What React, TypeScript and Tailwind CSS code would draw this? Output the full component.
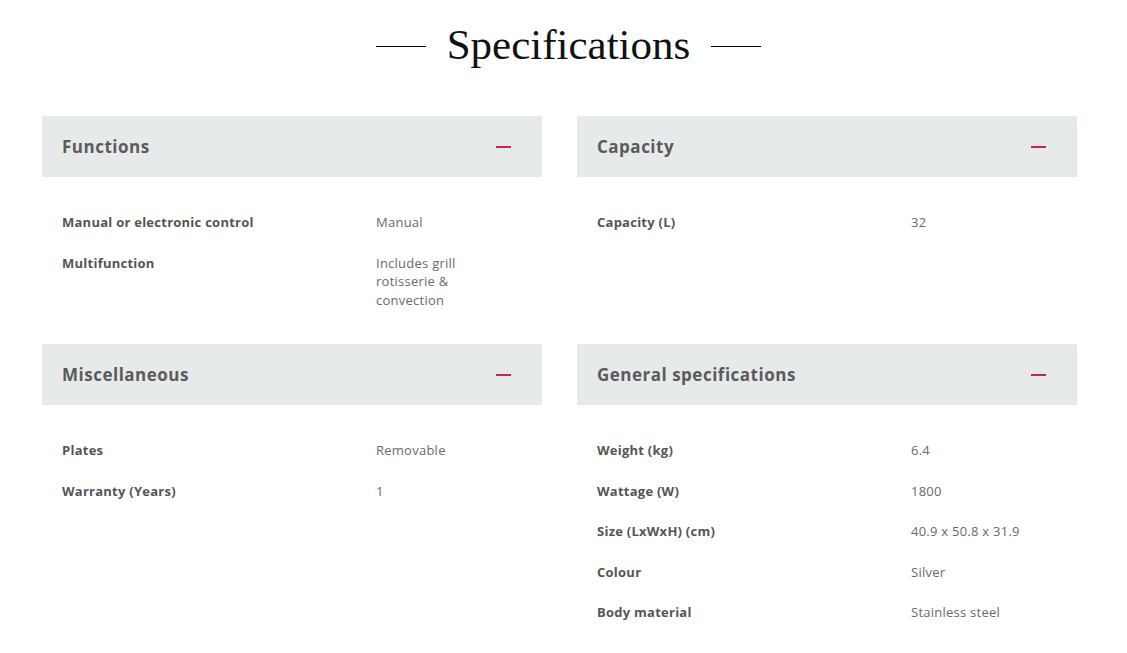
import React from "react";

type Row = [string, string];
type Section = { title: string; rows: Row[] };

const sections: Section[] = [
  {
    title: "Functions",
    rows: [
      ["Manual or electronic control", "Manual"],
      ["Multifunction", "Includes grill rotisserie & convection"],
    ],
  },
  { title: "Capacity", rows: [["Capacity (L)", "32"]] },
  {
    title: "Miscellaneous",
    rows: [
      ["Plates", "Removable"],
      ["Warranty (Years)", "1"],
    ],
  },
  {
    title: "General specifications",
    rows: [
      ["Weight (kg)", "6.4"],
      ["Wattage (W)", "1800"],
      ["Size (LxWxH) (cm)", "40.9 x 50.8 x 31.9"],
      ["Colour", "Silver"],
      ["Body material", "Stainless steel"],
    ],
  },
];

function SpecSection({ s }: { s: Section }) {
  return (
    <div className="pb-[24px]">
      <div className="h-[61px] bg-[#e7eaeb] pl-5 pr-[31px] flex items-center justify-between">
        <span className="text-[17px] tracking-[0.5px] font-bold text-[#5b5b5b]">{s.title}</span>
        <span className="block w-[15px] h-[2px] bg-[#c8264d]" />
      </div>
      <div className="pt-[25px]">
        {s.rows.map(([k, v]) => (
          <div key={k} className="flex items-start pl-5 py-[11px] text-[13px] leading-[18.5px] tracking-[0.25px]">
            <div className="w-[314px] font-bold text-[#555555]">{k}</div>
            <div className="w-[110px] text-[#6a6a6a]">{v}</div>
          </div>
        ))}
      </div>
    </div>
  );
}

export default function App() {
  return (
    <div className="w-[1127px] h-[653px] bg-white overflow-hidden" style={{ fontFamily: '"Open Sans", "Noto Sans", sans-serif' }}>
      <div className="pt-[20px] pl-[10px] flex items-center justify-center gap-[21px]">
        <span className="block w-[50px] h-px bg-black mt-[3px]" />
        <h1
          className="text-[43px] leading-[50px] text-[#111]"
          style={{ fontFamily: '"Liberation Serif", serif' }}
        >
          Specifications
        </h1>
        <span className="block w-[50px] h-px bg-black mt-[3px]" />
      </div>
      <div className="ml-[42px] w-[1035px] mt-[46px] grid grid-cols-2 gap-x-[35px]">
        {sections.map((s) => (
          <SpecSection key={s.title} s={s} />
        ))}
      </div>
    </div>
  );
}
